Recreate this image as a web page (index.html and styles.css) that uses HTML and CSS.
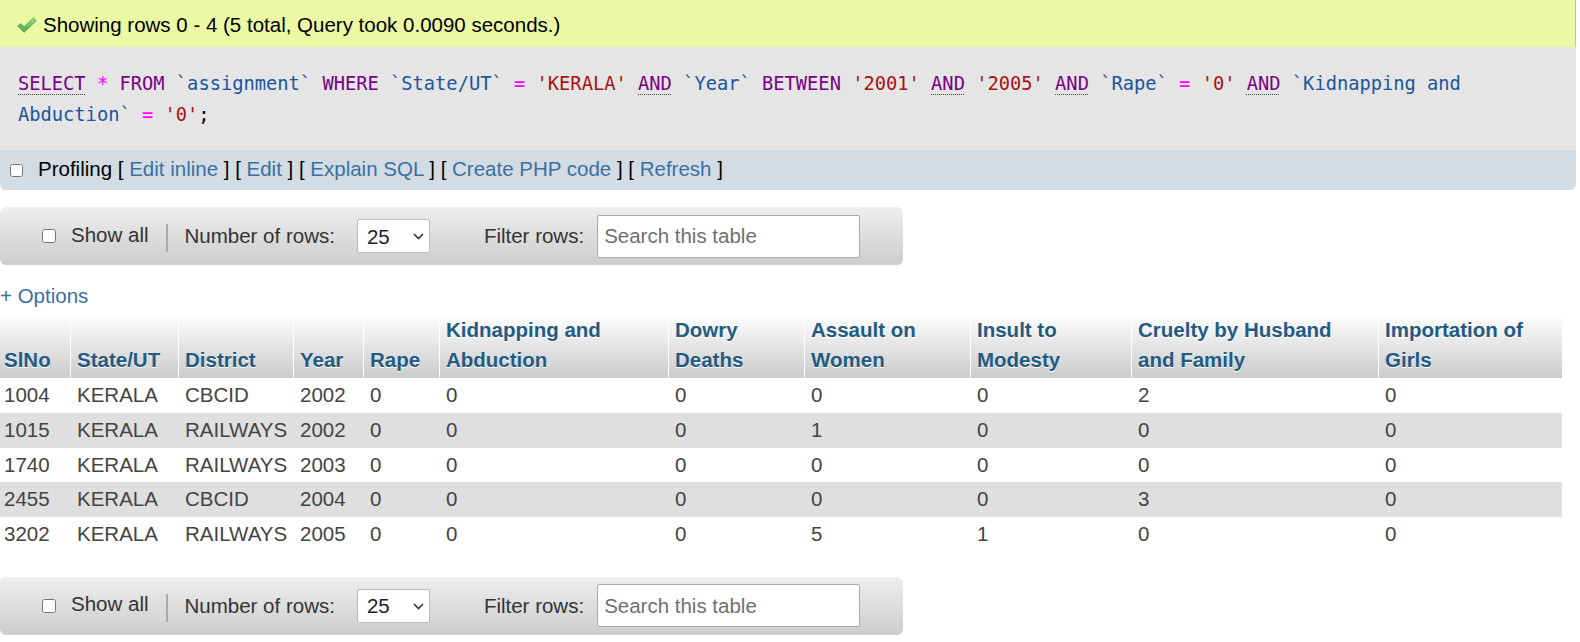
FILE: index.html
```html
<!DOCTYPE html>
<html>
<head>
<meta charset="utf-8">
<link rel="stylesheet" href="styles.css">
</head>
<body>
<div class="result">
  <div class="success">
    <svg class="check" width="20" height="16" viewBox="0 0 20 16">
      <defs>
        <linearGradient id="g" x1="0" y1="0" x2="0" y2="1">
          <stop offset="0" stop-color="#9fdc8f"/>
          <stop offset="1" stop-color="#4fa64a"/>
        </linearGradient>
      </defs>
      <polygon points="0.8,9.2 3.6,6.6 7.2,10 16.4,1 19.2,3.6 7.2,15.2" fill="url(#g)" stroke="#4c9a45" stroke-width="0.9" stroke-linejoin="round"/>
    </svg>
    <span>Showing rows 0 - 4 (5 total, Query took 0.0090 seconds.)</span>
  </div>
  <div class="sqlbox">
    <code class="sql"><span class="kw doc">SELECT</span> <span class="op">*</span> <span class="kw">FROM</span> <span class="id">`assignment`</span> <span class="kw">WHERE</span> <span class="id">`State/UT`</span> <span class="op">=</span> <span class="str">'KERALA'</span> <span class="kw doc">AND</span> <span class="id">`Year`</span> <span class="kw">BETWEEN</span> <span class="str">'2001'</span> <span class="kw doc">AND</span> <span class="str">'2005'</span> <span class="kw doc">AND</span> <span class="id">`Rape`</span> <span class="op">=</span> <span class="str">'0'</span> <span class="kw doc">AND</span> <span class="id">`Kidnapping and</span><br><span class="id">Abduction`</span> <span class="op">=</span> <span class="str">'0'</span>;</code>
  </div>
  <div class="tools">
    <input type="checkbox" class="cb tools-cb">
    <span class="tools-text">Profiling [ <a class="link">Edit inline</a> ] [ <a class="link">Edit</a> ] [ <a class="link">Explain SQL</a> ] [ <a class="link">Create PHP code</a> ] [ <a class="link">Refresh</a> ]</span>
  </div>
</div>

<div class="navigation">
  <input type="checkbox" class="cb nav-cb">
  <span class="lbl showall">Show all</span>
  <span class="sep"></span>
  <span class="lbl">Number of rows:</span>
  <span class="selwrap">
    <select class="rows"><option>25</option></select>
    <svg class="chev" width="11" height="7" viewBox="0 0 11 7"><polyline points="1,1 5.5,5.5 10,1" fill="none" stroke="#333" stroke-width="1.6"/></svg>
  </span>
  <span class="lbl filter">Filter rows:</span>
  <input class="search" type="text" placeholder="Search this table">
</div>

<a class="options link">+ Options</a>

<table class="data">
  <colgroup>
    <col class="c1"><col class="c2"><col class="c3"><col class="c4"><col class="c5"><col class="c6"><col class="c7"><col class="c8"><col class="c9"><col class="c10"><col class="c11">
  </colgroup>
  <thead>
    <tr>
      <th>SlNo</th>
      <th>State/UT</th>
      <th>District</th>
      <th>Year</th>
      <th>Rape</th>
      <th>Kidnapping and<br>Abduction</th>
      <th>Dowry<br>Deaths</th>
      <th>Assault on<br>Women</th>
      <th>Insult to<br>Modesty</th>
      <th>Cruelty by Husband<br>and Family</th>
      <th>Importation of<br>Girls</th>
    </tr>
  </thead>
  <tbody>
    <tr class="odd"><td>1004</td><td>KERALA</td><td>CBCID</td><td>2002</td><td>0</td><td>0</td><td>0</td><td>0</td><td>0</td><td>2</td><td>0</td></tr>
    <tr class="even"><td>1015</td><td>KERALA</td><td>RAILWAYS</td><td>2002</td><td>0</td><td>0</td><td>0</td><td>1</td><td>0</td><td>0</td><td>0</td></tr>
    <tr class="odd"><td>1740</td><td>KERALA</td><td>RAILWAYS</td><td>2003</td><td>0</td><td>0</td><td>0</td><td>0</td><td>0</td><td>0</td><td>0</td></tr>
    <tr class="even"><td>2455</td><td>KERALA</td><td>CBCID</td><td>2004</td><td>0</td><td>0</td><td>0</td><td>0</td><td>0</td><td>3</td><td>0</td></tr>
    <tr class="odd"><td>3202</td><td>KERALA</td><td>RAILWAYS</td><td>2005</td><td>0</td><td>0</td><td>0</td><td>5</td><td>1</td><td>0</td><td>0</td></tr>
  </tbody>
</table>

<div class="navigation bottom">
  <input type="checkbox" class="cb nav-cb">
  <span class="lbl showall">Show all</span>
  <span class="sep"></span>
  <span class="lbl">Number of rows:</span>
  <span class="selwrap">
    <select class="rows"><option>25</option></select>
    <svg class="chev" width="11" height="7" viewBox="0 0 11 7"><polyline points="1,1 5.5,5.5 10,1" fill="none" stroke="#333" stroke-width="1.6"/></svg>
  </span>
  <span class="lbl filter">Filter rows:</span>
  <input class="search" type="text" placeholder="Search this table">
</div>
</body>
</html>
```

FILE: styles.css
```css
html, body {
  margin: 0;
  padding: 0;
  background: #fff;
}
body {
  font-family: "Liberation Sans", Arial, sans-serif;
  font-size: 20.5px;
  color: #444;
  width: 1580px;
  overflow: hidden;
}

.result {
  width: 1576px;
}

.success {
  height: 47px;
  box-sizing: border-box;
  background: #ebf8a4;
  border-right: 1px solid #b9d36f;
  display: flex;
  align-items: center;
  color: #000;
  line-height: 24px;
  padding-left: 17px;
  padding-top: 2px;
}
.check {
  display: block;
  margin-right: 6px;
  margin-top: 1px;
}

.sqlbox {
  background: #e5e5e5;
  padding: 22px 18px 20px;
  height: 103px;
  box-sizing: border-box;
}
.sql {
  display: block;
  font-family: "DejaVu Sans Mono", "Liberation Mono", monospace;
  font-size: 18.73px;
  line-height: 30.8px;
  white-space: nowrap;
  color: #000;
}
.kw { color: #770088; }
.doc {
  text-decoration: underline dotted #444;
  text-underline-offset: 4px;
  text-decoration-thickness: 1px;
}
.op { color: #ff00ff; }
.str { color: #aa1111; }
.id { color: #1a55a0; }

.tools {
  background: #d3dce3;
  height: 40px;
  box-sizing: border-box;
  color: #000;
  border-radius: 0 0 6px 6px;
  display: flex;
  align-items: center;
  padding-bottom: 3px;
}
.tools-text {
  white-space: nowrap;
  line-height: 24px;
}
.link {
  color: #3a70a3;
  text-decoration: none;
}
.cb {
  width: 13px;
  height: 13px;
  margin: 0;
  flex: none;
}
.tools-cb {
  margin-left: 10px;
  margin-right: 15px;
  margin-top: 4px;
}

.navigation {
  margin-top: 17px;
  width: 903px;
  height: 58px;
  box-sizing: border-box;
  border-radius: 6px;
  background: linear-gradient(#eeeeee, #cdcdcd);
  display: flex;
  align-items: center;
  padding-left: 42px;
  color: #333;
}
.navigation.bottom {
  margin-top: 25px;
}
.nav-cb {
  width: 14px;
  height: 14px;
  margin-right: 15px;
}
.lbl {
  line-height: 24px;
  white-space: nowrap;
}
.showall {
  margin-top: -3px;
}
.sep {
  width: 2px;
  height: 28px;
  background: #b0a8a4;
  margin-left: 17px;
  margin-right: 17px;
  margin-top: 4px;
}
.selwrap {
  position: relative;
  margin-left: 22px;
  display: block;
  height: 34px;
}
.rows {
  -webkit-appearance: none;
  appearance: none;
  width: 73px;
  height: 34px;
  box-sizing: border-box;
  border: 1px solid #bbb;
  border-radius: 2px;
  background: #fff;
  font-family: "Liberation Sans", Arial, sans-serif;
  font-size: 20.5px;
  color: #222;
  padding: 0 0 0 9px;
  margin: 0;
}
.chev {
  position: absolute;
  right: 6px;
  top: 14px;
  pointer-events: none;
}
.filter {
  margin-left: 54px;
}
.search {
  margin-left: 13px;
  width: 263px;
  height: 43px;
  box-sizing: border-box;
  border: 1px solid #aaa;
  border-radius: 2px;
  background: #fff;
  font-family: "Liberation Sans", Arial, sans-serif;
  font-size: 20.5px;
  padding: 0 6px;
  color: #333;
}
.search::placeholder {
  color: #6f6f6f;
}

.options {
  display: block;
  margin-top: 19px;
  margin-bottom: 5px;
  line-height: 24px;
}

.data {
  width: 1562px;
  table-layout: fixed;
  border-collapse: separate;
  border-spacing: 0;
}
.c1 { width: 70px; }
.c2 { width: 108px; }
.c3 { width: 115px; }
.c4 { width: 70px; }
.c5 { width: 76px; }
.c6 { width: 229px; }
.c7 { width: 136px; }
.c8 { width: 166px; }
.c9 { width: 161px; }
.c10 { width: 247px; }
.c11 { width: 184px; }

.data th {
  background: linear-gradient(#ffffff, #cbcbcb);
  color: #235a81;
  font-weight: bold;
  text-align: left;
  vertical-align: bottom;
  line-height: 30px;
  padding: 1.5px 6px 3.5px;
  text-shadow: 0 1px 0 #fff;
  white-space: nowrap;
  border-left: 1px solid #fff;
}
.data th:first-child {
  border-left: none;
  padding-left: 4px;
}
.data td {
  padding: 5px 6px;
  line-height: 24.75px;
  color: #444;
  white-space: nowrap;
  border-left: 1px solid transparent;
}
.data td:first-child {
  border-left: none;
  padding-left: 4px;
}
.data tr.odd td { background: #fff; }
.data tr.even td { background: #dfdfdf; }
```
